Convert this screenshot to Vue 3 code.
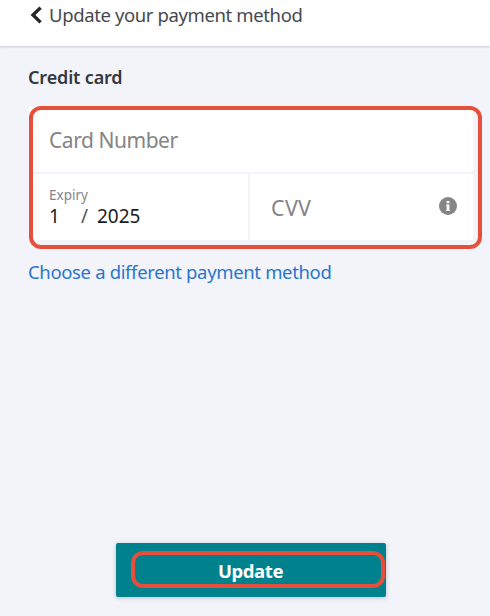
<template>
  <div class="payment-page">
    <header class="page-header">
      <button class="back-btn" aria-label="Back">
        <svg width="13" height="18" viewBox="0 0 13 18">
          <path d="M10.6 1.6 L3 9 L10.6 16.4" fill="none" stroke="#25272b" stroke-width="3.4" />
        </svg>
      </button>
      <h1 class="page-title">Update your payment method</h1>
    </header>

    <main class="content">
      <h2 class="section-title">Credit card</h2>

      <div class="card-form">
        <div class="fields">
          <input v-model="cardNumber" class="field card-number" type="text" placeholder="Card Number" />
          <div class="field-row">
            <div class="field expiry">
              <span class="expiry-label">Expiry</span>
              <div class="expiry-value">
                <span class="month">{{ expiry.month }}</span>
                <span class="slash">/</span>
                <span class="year">{{ expiry.year }}</span>
              </div>
            </div>
            <div class="field cvv">
              <input v-model="cvv" class="cvv-input" type="text" placeholder="CVV" />
              <svg class="info-icon" width="18" height="18" viewBox="0 0 18 18">
                <circle cx="9" cy="9" r="9" fill="#858587" />
                <rect x="7.6" y="3.9" width="2.8" height="2.3" fill="#fff" />
                <path d="M7 7.4 H10.4 V12.7 H11 V13.8 H7 V12.7 H7.6 V8.5 H7 Z" fill="#fff" />
              </svg>
            </div>
          </div>
        </div>
        <div class="form-outline"></div>
      </div>

      <a class="other-method" href="#">Choose a different payment method</a>
    </main>

    <footer class="actions">
      <button class="update-btn">
        <span class="update-text">Update</span>
      </button>
    </footer>
  </div>
</template>

<script setup>
import { ref } from 'vue'

const cardNumber = ref('')
const cvv = ref('')
const expiry = ref({ month: '1', year: '2025' })
</script>

<style>
body {
  background: #f3f4f9;
}
</style>

<style scoped>
.payment-page {
  display: flex;
  flex-direction: column;
  height: 616px;
  overflow: hidden;
  background: #f3f4f9;
  font-family: 'Noto Sans', 'Open Sans', sans-serif;
}

.payment-page * {
  box-sizing: border-box;
}

.page-header {
  display: flex;
  align-items: flex-start;
  height: 46px;
  padding-left: 30px;
  background: #fff;
  box-shadow: 0 1px 2px rgba(40, 42, 60, 0.2);
}

.back-btn {
  display: flex;
  width: 19px;
  padding: 6px 0 0;
  border: none;
  background: none;
}

.page-title {
  margin: 2px 0 0;
  font-size: 18.5px;
  font-weight: 400;
  line-height: 25px;
  letter-spacing: -0.38px;
  color: #46484d;
  white-space: nowrap;
}

.content {
  flex: 1;
  padding: 19px 8px 0 29px;
}

.section-title {
  margin: 0 0 16px -1px;
  font-size: 18px;
  font-weight: 600;
  line-height: 25px;
  letter-spacing: -0.15px;
  color: #36383d;
}

.card-form {
  position: relative;
  height: 143px;
  margin-bottom: 10px;
}

.fields {
  display: flex;
  flex-direction: column;
  gap: 2px;
  width: 444px;
  padding-top: 1px;
}

.field {
  border: none;
  border-radius: 0;
  background: #fff;
}

.card-number {
  width: 100%;
  height: 65px;
  padding: 1px 20px 0;
  font-family: inherit;
  font-size: 21px;
  letter-spacing: -0.45px;
  outline: none;
}

.card-number::placeholder,
.cvv-input::placeholder {
  color: #848486;
}

.field-row {
  display: flex;
  gap: 2px;
  height: 66px;
}

.expiry {
  flex: none;
  width: 219px;
  padding: 12px 20px 0;
}

.expiry-label {
  display: block;
  font-size: 13.5px;
  line-height: 18px;
  color: #858587;
}

.expiry-value {
  display: flex;
  font-size: 19px;
  line-height: 24px;
  color: #1c1c1e;
}

.month {
  width: 32px;
}

.slash {
  width: 16px;
  color: #555;
}

.cvv {
  display: flex;
  flex: 1;
  align-items: center;
  min-width: 0;
  padding: 0 16px 0 21px;
}

.cvv-input {
  flex: 1;
  min-width: 0;
  padding: 0;
  border: none;
  font-family: inherit;
  font-size: 21.5px;
  letter-spacing: 0.3px;
  outline: none;
}

.info-icon {
  flex: none;
  margin-bottom: 3px;
}

.form-outline {
  position: absolute;
  inset: 0;
  border: 4px solid #e4503c;
  border-radius: 12px;
  pointer-events: none;
}

.other-method {
  margin-left: -1px;
  font-size: 18.5px;
  line-height: 25px;
  letter-spacing: -0.35px;
  color: #2a75cc;
  text-decoration: none;
  white-space: nowrap;
}

.actions {
  display: flex;
  padding: 0 0 19px 116px;
}

.update-btn {
  display: flex;
  width: 270px;
  height: 54px;
  padding: 8px 1px 9px 15px;
  border: none;
  border-radius: 2px;
  background: #00828e;
  box-shadow: 0 1px 4px rgba(0, 30, 60, 0.25);
}

.update-text {
  flex: 1;
  height: 37px;
  padding-right: 15px;
  border: 4px solid #e4503c;
  border-radius: 12px;
  font-family: 'Noto Sans', 'Open Sans', sans-serif;
  font-size: 18.5px;
  font-weight: 700;
  line-height: 31px;
  letter-spacing: -0.4px;
  color: #fff;
}
</style>
